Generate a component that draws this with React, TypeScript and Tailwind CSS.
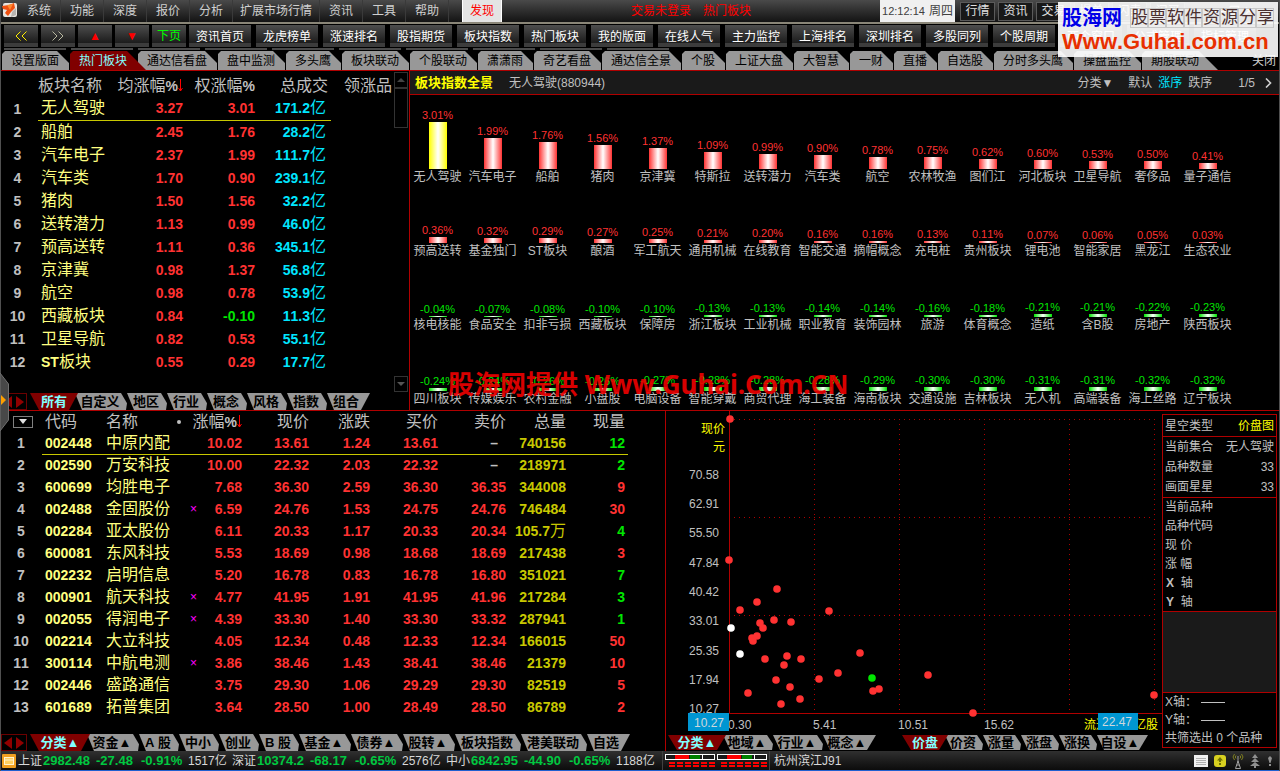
import React from "react";

const MENUS = ["系统", "功能", "深度", "报价", "分析", "扩展市场行情", "资讯", "工具", "帮助"];
const QUICK = ["行情", "资讯", "交易", "撮单", "闪卖", "闪买"];
const NAV = [
  { text: "«", name: "后退", cls: "text-[#ffee00]" },
  { text: "»", name: "前进", cls: "text-[#b8b8a0]" },
  { text: "▲", name: "上移", cls: "text-[#ff0000]" },
  { text: "▼", name: "下移", cls: "text-[#ff0000]" },
  { text: "下页", name: "下页", cls: "text-[#00ff00]" },
];
const TOOLS = [
  "资讯首页", "龙虎榜单", "涨速排名", "股指期货", "板块指数", "热门板块", "我的版面", "在线人气",
  "主力监控", "上海排名", "深圳排名", "多股同列", "个股周期", "两个窗口", "公式管理", "指标管理",
];
const TABS = [
  "设置版面", "热门板块", "通达信看盘", "盘中监测", "多头鹰", "板块联动", "个股联动", "潇潇雨",
  "奇艺看盘", "通达信全景", "个股", "上证大盘", "大智慧", "一财", "直播", "自选股", "分时多头鹰",
  "操盘监控", "期股联动",
];

const SECTORS: [string, string, string, string][] = [
  ["无人驾驶", "3.27", "3.01", "171.2"],
  ["船舶", "2.45", "1.76", "28.2"],
  ["汽车电子", "2.37", "1.99", "111.7"],
  ["汽车类", "1.70", "0.90", "239.1"],
  ["猪肉", "1.50", "1.56", "32.2"],
  ["送转潜力", "1.13", "0.99", "46.0"],
  ["预高送转", "1.11", "0.36", "345.1"],
  ["京津冀", "0.98", "1.37", "56.8"],
  ["航空", "0.98", "0.78", "53.9"],
  ["西藏板块", "0.84", "-0.10", "11.3"],
  ["卫星导航", "0.82", "0.53", "55.1"],
  ["ST板块", "0.55", "0.29", "17.7"],
];

const BARS: [string, number][] = [
  ["无人驾驶", 3.01], ["汽车电子", 1.99], ["船舶", 1.76], ["猪肉", 1.56], ["京津冀", 1.37],
  ["特斯拉", 1.09], ["送转潜力", 0.99], ["汽车类", 0.9], ["航空", 0.78], ["农林牧渔", 0.75],
  ["图们江", 0.62], ["河北板块", 0.6], ["卫星导航", 0.53], ["奢侈品", 0.5], ["量子通信", 0.41],
  ["预高送转", 0.36], ["基金独门", 0.32], ["ST板块", 0.29], ["酿酒", 0.27], ["军工航天", 0.25],
  ["通用机械", 0.21], ["在线教育", 0.2], ["智能交通", 0.16], ["摘帽概念", 0.16], ["充电桩", 0.13],
  ["贵州板块", 0.11], ["锂电池", 0.07], ["智能家居", 0.06], ["黑龙江", 0.05], ["生态农业", 0.03],
  ["核电核能", -0.04], ["食品安全", -0.07], ["扣非亏损", -0.08], ["西藏板块", -0.1], ["保障房", -0.1],
  ["浙江板块", -0.13], ["工业机械", -0.13], ["职业教育", -0.14], ["装饰园林", -0.14], ["旅游", -0.16],
  ["体育概念", -0.18], ["造纸", -0.21], ["含B股", -0.21], ["房地产", -0.22], ["陕西板块", -0.23],
  ["四川板块", -0.24], ["传媒娱乐", -0.24], ["农村金融", -0.26], ["小盘股", -0.26], ["电脑设备", -0.27],
  ["智能穿戴", -0.28], ["商贸代理", -0.28], ["海工装备", -0.28], ["海南板块", -0.29], ["交通设施", -0.3],
  ["吉林板块", -0.3], ["无人机", -0.31], ["高端装备", -0.31], ["海上丝路", -0.32], ["辽宁板块", -0.32],
];

type Stock = {
  code: string; name: string; mark?: boolean; nums: string[]; vol: string; unit?: string; now: string; up: boolean;
};
const STOCKS: Stock[] = [
  { code: "002448", name: "中原内配", nums: ["10.02", "13.61", "1.24", "13.61", "–"], vol: "740156", now: "12", up: false },
  { code: "002590", name: "万安科技", nums: ["10.00", "22.32", "2.03", "22.32", "–"], vol: "218971", now: "2", up: false },
  { code: "600699", name: "均胜电子", nums: ["7.68", "36.30", "2.59", "36.30", "36.35"], vol: "344008", now: "9", up: true },
  { code: "002488", name: "金固股份", mark: true, nums: ["6.59", "24.76", "1.53", "24.75", "24.76"], vol: "746484", now: "30", up: true },
  { code: "002284", name: "亚太股份", nums: ["6.11", "20.33", "1.17", "20.33", "20.34"], vol: "105.7", unit: "万", now: "4", up: false },
  { code: "600081", name: "东风科技", nums: ["5.53", "18.69", "0.98", "18.68", "18.69"], vol: "217438", now: "3", up: true },
  { code: "002232", name: "启明信息", nums: ["5.20", "16.78", "0.83", "16.78", "16.80"], vol: "351021", now: "7", up: false },
  { code: "000901", name: "航天科技", mark: true, nums: ["4.77", "41.95", "1.91", "41.95", "41.96"], vol: "217284", now: "3", up: false },
  { code: "002055", name: "得润电子", mark: true, nums: ["4.39", "33.30", "1.40", "33.30", "33.32"], vol: "287941", now: "1", up: false },
  { code: "002214", name: "大立科技", nums: ["4.05", "12.34", "0.48", "12.33", "12.34"], vol: "166015", now: "50", up: true },
  { code: "300114", name: "中航电测", mark: true, nums: ["3.86", "38.46", "1.43", "38.41", "38.46"], vol: "21379", now: "10", up: true },
  { code: "002446", name: "盛路通信", nums: ["3.75", "29.30", "1.06", "29.29", "29.30"], vol: "82519", now: "5", up: true },
  { code: "601689", name: "拓普集团", nums: ["3.64", "28.50", "1.00", "28.49", "28.50"], vol: "86789", now: "2", up: true },
];

const POINTS: [number, number, string][] = [
  [64, 8, "#ff3232"], [63, 149, "#ff3232"], [111, 178, "#ff3232"], [91, 191, "#ff3232"], [74, 199, "#ff3232"],
  [163, 200, "#ff3232"], [94, 212, "#ff3232"], [108, 209, "#ff3232"], [125, 211, "#ff3232"], [97, 217, "#ff3232"],
  [86, 227, "#ff3232"], [91, 225, "#ff3232"], [87, 230, "#ff3232"], [65, 217, "#ffffff"], [74, 243, "#ffffff"],
  [99, 248, "#ff3232"], [121, 245, "#ff3232"], [135, 248, "#ff3232"], [118, 254, "#ff3232"], [110, 269, "#ff3232"],
  [153, 268, "#ff3232"], [172, 262, "#ff3232"], [194, 242, "#ff3232"], [206, 267, "#00e600"], [262, 264, "#ff3232"],
  [213, 278, "#ff3232"], [207, 280, "#ff3232"], [124, 276, "#ff3232"], [82, 282, "#ff3232"], [134, 288, "#ff3232"],
  [115, 293, "#ff3232"], [307, 302, "#ff3232"], [488, 284, "#ff3232"],
];
const Y_LABELS: [string, number][] = [
  ["70.58", 64], ["62.91", 93], ["55.50", 122], ["47.84", 152], ["40.42", 181],
  ["33.01", 210], ["25.35", 240], ["17.94", 269], ["10.27", 298],
];

function SortArrow() {
  return (
    <svg className="inline-block h-[13px] w-[5px] align-[-1px]" viewBox="0 0 5 13" aria-hidden="true">
      <path d="M2.5 0V12M0.5 9L2.5 12L4.5 9" stroke="#ff0000" strokeWidth="1" fill="none" />
    </svg>
  );
}

const SLANT =
  "[clip-path:polygon(5px_0,calc(100%_-_9px)_0,calc(100%_-_3px)_60%,calc(100%_-_4px)_100%,12px_100%)]";
const LAST_SLANT = "[clip-path:polygon(5px_0,100%_0,calc(100%_-_9px)_100%,12px_100%)]";
const TRAPEZOID = "[clip-path:polygon(0_0,100%_0,calc(100%_-_9px)_100%,9px_100%)]";

function SlantTab({ text, width, active, last }: { text: string; width: string; active?: boolean; last?: boolean }) {
  return (
    <span className={`flex shrink-0 ${width}`}>
      <button
        type="button"
        role="tab"
        aria-selected={!!active}
        className={`-mr-2 flex h-full flex-1 items-center justify-center whitespace-nowrap text-[13px] leading-4 font-bold ${
          active ? `z-10 bg-[#800000] text-[#80ffff] ${TRAPEZOID}` : `bg-[#989898] text-black ${last ? LAST_SLANT : SLANT}`
        }`}
      >
        {text}
      </button>
    </span>
  );
}

function TabArrows() {
  return (
    <span className="mr-[3px] ml-px flex w-[26px] shrink-0 items-center justify-between border border-[#6b0000] px-0.5">
      <svg className="h-3 w-2" viewBox="0 0 8 12" aria-hidden="true"><path d="M8 0V12L0 6Z" fill="#900000" /></svg>
      <svg className="h-3 w-2" viewBox="0 0 8 12" aria-hidden="true"><path d="M0 0V12L8 6Z" fill="#900000" /></svg>
    </span>
  );
}

function MenuBar() {
  return (
    <header className="flex h-[24px] items-stretch border-b-2 border-[#8a8678] bg-linear-to-b from-[#4a4a4a] to-[#141414] text-[12px] leading-4">
      <svg className="mt-[3px] ml-[2px] h-[15px] w-[16px]" viewBox="0 0 16 15" aria-hidden="true">
        <rect x="1" y="0" width="14" height="14" rx="2" fill="#e8e4e0" />
        <path d="M0 3L7 2L12 0L13 5L9 9L6 13L3 10L5 7L1 6Z" fill="#f05010" />
        <path d="M5 2L11 1L8 7Z" fill="#ff8a30" />
        <path d="M10 9L14 5V12L9 14Z" fill="#b8b4b0" />
      </svg>
      <nav className="flex">
        {MENUS.map((m) => (
          <button
            key={m}
            type="button"
            className={`border-r border-[#3a3a3a] text-[#d0d0d0] ${m.length > 2 ? "w-[87px]" : "w-[43px]"}`}
          >
            {m}
          </button>
        ))}
      </nav>
      <button type="button" className="ml-[13px] w-[40px] border-x border-white bg-[#e4e4e4] text-[#ff0000]">发现</button>
      <div className="flex flex-1 items-center justify-center gap-3 text-[#ff0000]">
        <span>交易未登录</span>
        <span>热门板块</span>
      </div>
      <div className="flex w-[75px] items-center justify-center gap-1 bg-[#f0f0f0] text-[#404040]">
        <time className="text-[11px]">12:12:14</time>
        <span>周四</span>
      </div>
      <div className="ml-[4px] flex w-[321px] items-center gap-[3px] pl-px">
        {QUICK.map((q) => (
          <button key={q} type="button" className="h-[19px] w-[35px] shrink-0 border border-[#5a5a5a] bg-[#181818] text-[#e0e0e0]">
            {q}
          </button>
        ))}
        <span className="flex-1 text-center text-[#e0e0e0]">— ❐ ✕</span>
      </div>
    </header>
  );
}

function ToolBar() {
  return (
    <div className="h-[27px] overflow-hidden bg-black px-1 text-[12px] leading-4">
      <div className="mt-px flex h-[22px] gap-[5px]">
        <div className="flex gap-[3px]">
          {NAV.map((n) => (
            <button
              key={n.name}
              type="button"
              aria-label={n.name}
              className="flex h-[22px] w-[34px] shrink-0 items-center justify-center border-b-4 border-[#3c3c3c] bg-linear-to-b from-[#4e4e4e] to-[#1c1c1c] pt-1"
            >
              {n.text === "«" || n.text === "»" ? (
                <svg className="h-[10px] w-3" viewBox="0 0 12 10" aria-hidden="true">
                  <path
                    d={n.text === "«" ? "M5.5 0.5L1 5L5.5 9.5M11.5 0.5L7 5L11.5 9.5" : "M0.5 0.5L5 5L0.5 9.5M6.5 0.5L11 5L6.5 9.5"}
                    fill="none"
                    stroke={n.text === "«" ? "#ffee00" : "#b8b8a0"}
                  />
                </svg>
              ) : (
                <span className={n.cls}>{n.text}</span>
              )}
            </button>
          ))}
        </div>
        <div className="-ml-[2px] flex gap-[5px]">
          {TOOLS.map((t) => (
            <button
              key={t}
              type="button"
              className="h-[22px] w-[62px] shrink-0 border-b-4 border-[#3c3c3c] bg-linear-to-b from-[#4e4e4e] to-[#1c1c1c] pt-1 whitespace-nowrap text-white"
            >
              {t}
            </button>
          ))}
        </div>
      </div>
      <div className="mt-px flex gap-[5px]">
        {Array.from({ length: 10 }, (_, i) => (
          <span key={i} className="h-[2px] w-[62px] shrink-0 bg-[#4a4a4a]" />
        ))}
      </div>
    </div>
  );
}

const TAB_W: Record<number, string> = { 2: "w-[44px]", 3: "w-[56px]", 4: "w-[68px]", 5: "w-[80px]" };

function PageTabs() {
  return (
    <div className="flex h-[20px] items-stretch border-b border-[#b00000] bg-black pl-[2px] text-[12px] leading-4">
      <div role="tablist" className="flex">
        {TABS.map((t, i) => (
          <span key={t} className={`flex shrink-0 ${TAB_W[t.length]}`}>
            <button
              type="button"
              role="tab"
              aria-selected={i === 1}
              className={`flex-1 pl-[9px] text-left whitespace-nowrap ${
                i === 1
                  ? "z-10 -mr-2 bg-[#800000] text-[#80ffff] [clip-path:polygon(0_3px,3px_0,calc(100%_-_19px)_0,100%_100%,0_100%)]"
                  : i === TABS.length - 1
                    ? "-mr-2 bg-[#989898] text-black [clip-path:polygon(0_3px,3px_0,calc(100%_-_19px)_0,100%_100%,0_100%)]"
                    : "mr-px bg-[#989898] text-black [clip-path:polygon(0_3px,3px_0,calc(100%_-_12px)_0,100%_12px,100%_100%,0_100%)]"
              }`}
            >
              {t}
            </button>
          </span>
        ))}
      </div>
      <button type="button" className="mr-1 ml-auto text-[#d0d0d0]">关闭</button>
    </div>
  );
}

function SectorTable() {
  return (
    <section className="flex w-[410px] shrink-0 flex-col border-r border-[#b00000]">
      <div className="flex flex-1">
        <table className="mt-[3px] w-[392px] table-fixed self-start text-[14px] leading-[22px]">
          <colgroup>
            <col className="w-[38px]" /><col className="w-[73px]" /><col className="w-[72px]" />
            <col className="w-[72px]" /><col className="w-[76px]" /><col className="w-[61px]" />
          </colgroup>
          <thead>
            <tr className="h-[23px] text-[16px] whitespace-nowrap text-[#c0c0c0]">
              <th aria-label="序号" />
              <th className="text-left font-normal">板块名称</th>
              <th className="text-right font-normal">均涨幅<span className="text-[14px] font-bold">%</span><SortArrow /></th>
              <th className="text-right font-normal">权涨幅<span className="text-[14px] font-bold">%</span></th>
              <th className="pr-[3px] text-right font-normal">总成交</th>
              <th className="text-right font-normal">领涨品</th>
            </tr>
          </thead>
          <tbody>
            {SECTORS.map((s, i) => {
              const line = i === 0 ? "border-b border-b-[#c8c800]" : "";
              return (
                <tr key={s[0]} className="h-[23px] font-bold">
                  <td className="pr-[3px] text-center text-[#c0c0c0]">{i + 1}</td>
                  <td className={`pl-[3px] text-[16px] font-normal whitespace-nowrap text-[#ffff80] ${line}`}>
                    {s[0].startsWith("ST") ? (
                      <><span className="text-[14px] font-bold">ST</span>{s[0].slice(2)}</>
                    ) : s[0]}
                  </td>
                  <td className={`text-right text-[#ff3232] ${line}`}>{s[1]}</td>
                  <td className={`text-right ${s[2].startsWith("-") ? "text-[#00e600]" : "text-[#ff3232]"} ${line}`}>{s[2]}</td>
                  <td className={`pr-[5px] text-right whitespace-nowrap text-[#00e6ff] ${line}`}>
                    {s[3]}<span className="text-[16px] font-normal">亿</span>
                  </td>
                  <td />
                </tr>
              );
            })}
          </tbody>
        </table>
        <div className="ml-[2px] flex w-[14px] flex-col justify-between py-px">
          <div>
            <button type="button" aria-label="向上滚动" className="flex h-[16px] w-[14px] items-center justify-center border border-[#333]">
              <svg className="h-1 w-2" viewBox="0 0 8 4" aria-hidden="true"><path d="M4 0L8 4H0Z" fill="#444" /></svg>
            </button>
            <div className="h-[40px] border border-[#333]" />
          </div>
          <button type="button" aria-label="向下滚动" className="flex h-[16px] w-[14px] items-center justify-center border border-[#333]">
            <svg className="h-1 w-2" viewBox="0 0 8 4" aria-hidden="true"><path d="M0 0H8L4 4Z" fill="#555" /></svg>
          </button>
        </div>
      </div>
      <div role="tablist" className="flex h-[17px]">
        <TabArrows />
        {["所有", "自定义", "地区", "行业", "概念", "风格", "指数", "组合"].map((t, i) => (
          <SlantTab key={t} text={t} width={i === 1 ? "w-[52px]" : "w-[40px]"} active={i === 0} last={i === 7} />
        ))}
      </div>
    </section>
  );
}

function Overview() {
  return (
    <section className="relative flex min-w-0 flex-1 flex-col">
      <div className="flex h-[24px] items-center border-b border-[#b00000] bg-[#1a1a1a] pr-2 pl-[5px] text-[12px] leading-4 text-[#c0c0c0]">
        <h2 className="text-[13px] font-bold text-[#ffff00]">板块指数全景</h2>
        <span className="ml-4">无人驾驶(880944)</span>
        <div className="ml-auto flex items-center gap-[6px]">
          <button type="button" className="mr-[9px]">分类▼</button>
          <button type="button">默认</button>
          <button type="button" className="text-[#00e6ff]">涨序</button>
          <button type="button">跌序</button>
          <span className="ml-5">1/5</span>
          <button type="button" aria-label="下一页" className="ml-1">
            <svg className="h-[10px] w-[7px]" viewBox="0 0 7 10" aria-hidden="true">
              <path d="M1 0.5L5.5 5L1 9.5" stroke="#d0d0d0" strokeWidth="1.6" fill="none" />
            </svg>
          </button>
        </div>
      </div>
      <div className="grid flex-1 auto-rows-[74px] grid-cols-[repeat(15,minmax(0,1fr))] pt-4 pr-[45px]">
        {BARS.map(([name, v], i) => {
          const h = Math.max(1, Math.round(Math.abs(v) * (v > 0 ? 15.6 : 13)));
          const fill =
            i === 0
              ? "bg-linear-to-r/srgb from-[#ffff00] via-white to-[#ffff00]"
              : v > 0
                ? "bg-linear-to-r/srgb from-[#ff3232] via-white to-[#ff3232]"
                : "bg-linear-to-r/srgb from-[#00e600] via-white to-[#00e600]";
          return (
            <div key={name + i} className="flex flex-col items-center justify-end">
              <span className={`text-[11px] leading-[13px] ${v > 0 ? "text-[#ff3232]" : "text-[#00e600]"}`}>{v.toFixed(2)}%</span>
              <span className={`w-[18px] shrink-0 ${fill}`} style={{ height: h }} />
              <span className="text-[12px] leading-4 whitespace-nowrap text-[#c0c0c0]">{name}</span>
            </div>
          );
        })}
      </div>
      <p className="pointer-events-none absolute bottom-2 left-[38px] font-['Noto_Sans','Noto_Sans_CJK_SC',sans-serif] text-[26px] leading-9 font-bold whitespace-nowrap text-[#f00000]/90">
        股海网提供 Www.Guhai.Com.CN
      </p>
    </section>
  );
}

const LOWER_TABS: [string, string][] = [
  ["分类▲", "w-[52px]"], ["资金▲", "w-[52px]"], ["A 股", "w-[40px]"], ["中小", "w-[40px]"], ["创业", "w-[40px]"],
  ["B 股", "w-[40px]"], ["基金▲", "w-[52px]"], ["债券▲", "w-[52px]"], ["股转▲", "w-[52px]"],
  ["板块指数", "w-[66px]"], ["港美联动", "w-[66px]"], ["自选", "w-[40px]"],
];

function StockTable() {
  return (
    <section className="flex w-[666px] shrink-0 flex-col border-r border-[#b00000]">
      <table className="w-[628px] table-fixed text-[14px] leading-5">
        <colgroup>
          <col className="w-[42px]" /><col className="w-[61px]" /><col className="w-[71px]" /><col className="w-[26px]" />
          <col className="w-[42px]" /><col className="w-[67px]" /><col className="w-[61px]" /><col className="w-[68px]" />
          <col className="w-[68px]" /><col className="w-[60px]" /><col className="w-[62px]" />
        </colgroup>
        <thead>
          <tr className="h-[21px] text-[16px] whitespace-nowrap text-[#c0c0c0]">
            <th>
              <button type="button" aria-label="选项" className="ml-[13px] flex h-[12px] w-[20px] items-center justify-center border border-[#808080]">
                <svg className="h-[5px] w-2" viewBox="0 0 8 5" aria-hidden="true"><path d="M0 0H8L4 5Z" fill="#e0e0e0" /></svg>
              </button>
            </th>
            <th className="pl-[3px] text-left font-normal">代码</th>
            <th className="pl-[3px] text-left font-normal">名称</th>
            <th colSpan={2} className="font-normal">
              <span className="flex items-center justify-between pl-[3px]">
                <span className="size-1 rounded-full bg-[#c0c0c0]" />
                <span>涨幅<span className="text-[14px] font-bold">%</span><SortArrow /></span>
              </span>
            </th>
            {["现价", "涨跌", "买价", "卖价", "总量"].map((h) => (
              <th key={h} className="text-right font-normal">{h}</th>
            ))}
            <th className="pr-[3px] text-right font-normal">现量</th>
          </tr>
        </thead>
        <tbody>
          {STOCKS.map((s, i) => {
            const line = i === 0 ? "border-b border-b-[#c8c800]" : "";
            return (
              <tr key={s.code} className="h-[22px] font-bold whitespace-nowrap">
                <td className="text-center text-[#c0c0c0]">{i + 1}</td>
                <td className={`pl-[3px] text-[#ffff80] ${line}`}>{s.code}</td>
                <td className={`pl-[3px] text-[16px] font-normal text-[#ffff80] ${line}`}>{s.name}</td>
                <td className={`pr-[3px] text-right text-[12px] font-normal text-[#ff00ff] ${line}`}>{s.mark ? "×" : ""}</td>
                {s.nums.map((n, j) => (
                  <td key={j} className={`text-right ${n === "–" ? "pr-2 text-[#c0c0c0]" : "text-[#ff3232]"} ${line}`}>{n}</td>
                ))}
                <td className={`text-right text-[#c8c800] ${line}`}>
                  {s.vol}{s.unit && <span className="text-[16px] font-normal">{s.unit}</span>}
                </td>
                <td className={`pr-[3px] text-right ${s.up ? "text-[#ff3232]" : "text-[#00e600]"} ${line}`}>{s.now}</td>
              </tr>
            );
          })}
        </tbody>
      </table>
      <div role="tablist" className="mt-auto flex h-[17px]">
        <TabArrows />
        {LOWER_TABS.map(([t, w], i) => (
          <SlantTab key={t} text={t} width={w} active={i === 0} last={i === LOWER_TABS.length - 1} />
        ))}
      </div>
    </section>
  );
}

function Scatter() {
  return (
    <section className="flex min-w-0 flex-1 flex-col">
      <svg className="block h-[322px] w-full" viewBox="0 0 496 322" role="img" aria-label="价盘图" fontSize="12">
        <g stroke="#b00000" strokeWidth="1" strokeDasharray="1 4" fill="none">
          <path d="M63 8.5H488M63 106.5H488M63 204.5H488" />
          <path d="M148.5 8V302M233.5 8V302M318.5 8V302M403.5 8V302M488.5 8V302" />
        </g>
        <path d="M63.5 0V302.5H496" stroke="#b00000" fill="none" />
        {POINTS.map(([x, y, c], i) => (
          <circle key={i} cx={x} cy={y} r="3.8" fill={c} />
        ))}
        <g fill="#ffff00">
          <text x="59" y="22" textAnchor="end">现价</text>
          <text x="59" y="40" textAnchor="end">元</text>
          <text x="418" y="318">流通</text>
          <text x="492" y="318" textAnchor="end">亿股</text>
        </g>
        <g fill="#c0c0c0">
          {Y_LABELS.map(([t, y]) => (
            <text key={t} x="53" y={y + 4} textAnchor="end">{t}</text>
          ))}
          <text x="62" y="318">0.30</text>
          <text x="147" y="318">5.41</text>
          <text x="232" y="318">10.51</text>
          <text x="318" y="318">15.62</text>
        </g>
        <rect x="22" y="302" width="41" height="18" fill="#0096d2" />
        <rect x="432" y="302" width="40" height="17" fill="#0096d2" />
        <g fill="#d0d8dc" textAnchor="middle">
          <text x="43" y="316">10.27</text>
          <text x="451" y="315">22.47</text>
        </g>
      </svg>
      <div className="mt-auto mb-px flex h-[15px] justify-between pl-[2px]">
        <div role="tablist" className="flex">
          {["分类▲", "地域▲", "行业▲", "概念▲"].map((t, i) => (
            <SlantTab key={t} text={t} width="w-[50px]" active={i === 0} last={i === 3} />
          ))}
        </div>
        <div role="tablist" className="mr-[22px] flex">
          {["价盘", "价资", "涨量", "涨盘", "涨换", "自设▲"].map((t, i) => (
            <SlantTab key={t} text={t} width={i === 5 ? "w-[48px]" : "w-[38px]"} active={i === 0} last={i === 5} />
          ))}
        </div>
      </div>
    </section>
  );
}

function InfoPanel() {
  const row = "flex items-center justify-between pr-[2px] pl-[2px]";
  return (
    <aside className="mt-[3px] mr-[3px] mb-[3px] flex w-[115px] shrink-0 flex-col border border-[#b00000] text-[12px] leading-4 text-[#c0c0c0]">
      <div className={`${row} h-[22px] border-b border-[#b00000]`}>
        <span>星空类型</span><span className="text-[#ffff00]">价盘图</span>
      </div>
      <dl className="border-b border-[#b00000] leading-[20px]">
        {[["当前集合", "无人驾驶"], ["品种数量", "33"], ["画面星星", "33"]].map(([k, v]) => (
          <div key={k} className={`${row} h-[20px]`}>
            <dt>{k}</dt>
            <dd>{v}</dd>
          </div>
        ))}
      </dl>
      <ul className="h-[114px] border-b border-[#b00000] leading-[19px]">
        {["当前品种", "品种代码", "现 价", "涨 幅"].map((t) => (
          <li key={t} className={row}>{t}</li>
        ))}
        {["X", "Y"].map((t) => (
          <li key={t} className="pl-[3px]"><b>{t}</b>&nbsp; 轴</li>
        ))}
      </ul>
      <div className="flex-1 border-b border-[#b00000] bg-[#1a1a1a]" />
      <div className="pl-[2px] leading-[18px] whitespace-nowrap">
        <p className="flex items-center gap-1">X轴： <span className="h-px w-6 bg-[#c0c0c0]" /></p>
        <p className="flex items-center gap-1">Y轴： <span className="h-px w-6 bg-[#c0c0c0]" /></p>
        <p>共筛选出 0 个品种</p>
      </div>
    </aside>
  );
}

const INDEXES = [
  { name: "上证", v: ["2982.48", "-27.48", "-0.91%"], amt: "1517亿" },
  { name: "深证", v: ["10374.2", "-68.17", "-0.65%"], amt: "2576亿" },
  { name: "中小", v: ["6842.95", "-44.90", "-0.65%"], amt: "1188亿" },
];

function Meter() {
  return (
    <svg className="h-[15px] w-[50px]" viewBox="0 0 50 15" aria-hidden="true">
      <rect x="0.5" y="1.5" width="49" height="5" fill="#1a1a1a" stroke="#fff" />
      <rect x="10" y="2" width="14" height="4" fill="#ff0000" />
      <rect x="25" y="2" width="10" height="4" fill="#008000" />
      <path d="M37.5 1V7" stroke="#fff" />
      <path d="M4 10H50M4 13H50" stroke="#ff0000" strokeWidth="2" strokeDasharray="6 2" />
    </svg>
  );
}

function StatusBar() {
  return (
    <footer className="border-b border-[#2060d0] bg-linear-to-b from-[#303030] to-[#0c0c0c]">
      <div className="flex h-[19px] items-center text-[12px] leading-4 text-[#d8d8d8]">
        <svg className="ml-[2px] h-[14px] w-[14px] shrink-0" viewBox="0 0 14 14" aria-hidden="true">
          <rect width="14" height="14" rx="1" fill="#f0a020" />
          <rect x="2.5" y="3.5" width="9" height="7" fill="#ffd060" stroke="#fff4d0" />
          <path d="M3 6H11" stroke="#fff4d0" />
        </svg>
        {INDEXES.map((x) => (
          <div key={x.name} className="flex w-[214px] shrink-0 items-center pl-[2px] whitespace-nowrap">
            <span>{x.name}</span>
            <span className="ml-px w-[53px] text-[13px] font-bold text-[#00c840]">{x.v[0]}</span>
            <span className="w-[45px] text-[13px] font-bold text-[#00c840]">{x.v[1]}</span>
            <span className="w-[47px] text-[13px] font-bold text-[#00c840]">{x.v[2]}</span>
            <span>{x.amt}</span>
          </div>
        ))}
        <div className="ml-[4px] flex h-full items-center gap-[2px] border-x border-[#404040] px-[2px]">
          <Meter />
          <Meter />
        </div>
        <span className="ml-[4px]">杭州滨江J91</span>
        <div className="mr-[6px] ml-auto flex items-center gap-[6px]">
          <svg className="h-[14px] w-[14px]" viewBox="0 0 14 14" aria-hidden="true">
            <rect y="1" width="14" height="12" fill="#f0f0f0" />
            <path d="M2 4.5H12M2 6.5H12M2 8.5H12M2 10.5H12" stroke="#b0b0b0" />
          </svg>
          <svg className="h-[14px] w-[12px]" viewBox="0 0 12 14" aria-hidden="true">
            <rect y="1" width="12" height="12" rx="3" fill="#d8d020" />
            <path d="M6 3L9 6.5H7V8H5V6.5H3ZM5 9H7V11H5Z" fill="#707000" />
          </svg>
          <svg className="h-[16px] w-[12px]" viewBox="0 0 12 16" aria-hidden="true">
            <path d="M2.5 1Q-0.5 4 2.5 7M9.5 1Q12.5 4 9.5 7M4 2.5Q2.5 4 4 5.5M8 2.5Q9.5 4 8 5.5" stroke="#808020" fill="none" />
            <path d="M6 3V9M6 8L3.5 15.5H8.5ZM4.5 12H7.5" stroke="#a0a0a0" fill="none" />
          </svg>
          <svg className="h-[14px] w-[10px]" viewBox="0 0 10 14" aria-hidden="true">
            <path d="M5 0L8 4H2ZM5 4L9 8H1ZM5 8L10 12H0ZM4 11H6V14H4Z" fill="#909090" />
          </svg>
          <svg className="h-[12px] w-[8px]" viewBox="0 0 8 12" aria-hidden="true">
            <path d="M4 1L6 3L4.5 8H3.5L2 3ZM3 9H5V11H3Z" fill="#909090" />
          </svg>
        </div>
      </div>
    </footer>
  );
}

export default function App() {
  return (
    <div className="relative flex min-h-screen flex-col overflow-x-hidden bg-black font-['Liberation_Sans','Noto_Sans_CJK_SC',sans-serif] [font-kerning:none]">
      <MenuBar />
      <ToolBar />
      <PageTabs />
      <div className="flex h-[340px] shrink-0 border-b border-[#b00000]">
        <SectorTable />
        <Overview />
      </div>
      <div className="flex flex-1">
        <StockTable />
        <Scatter />
        <InfoPanel />
      </div>
      <StatusBar />

      <div className="pointer-events-none absolute inset-0 border-x border-[#505050]" />
      <svg className="absolute top-[372px] left-0 h-[60px] w-[9px]" viewBox="0 0 9 60" aria-hidden="true">
        <path d="M0 1L8.5 12V48L0 59Z" fill="#484848" stroke="#707070" />
        <path d="M1 23L6 28L1 33Z" fill="#ffa000" />
      </svg>

      <div className="absolute top-[2px] right-[2px] flex h-[55px] w-[220px] flex-col justify-center bg-white/90 pl-[4px] whitespace-nowrap">
        <div className="flex items-center gap-2 leading-[24px]">
          <span className="text-[20px] font-bold text-[#0000e8]">股海网</span>
          <span className="flex text-[17px] text-[#4a3030]">
            {[..."股票软件资源分享"].map((c) => (
              <span key={c} className="w-[18px] border border-[#c8c8c8] text-center leading-[18px]">{c}</span>
            ))}
          </span>
        </div>
        <p className="text-[22px] leading-[24px] font-bold text-[#e83000]">Www.Guhai.com.cn</p>
      </div>
    </div>
  );
}
